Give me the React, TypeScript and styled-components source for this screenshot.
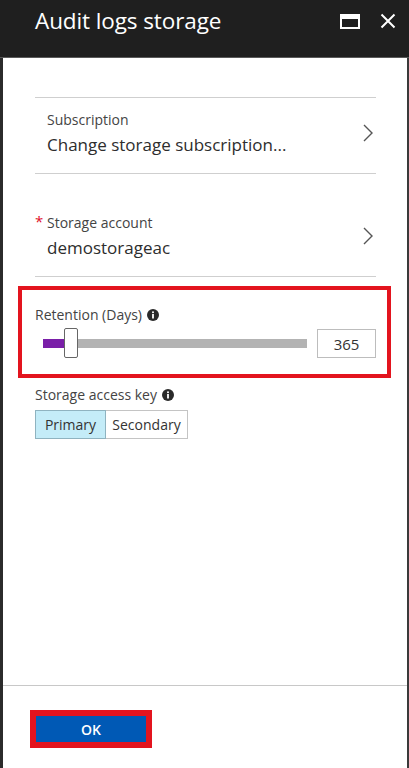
import React from 'react';
import styled, { createGlobalStyle } from 'styled-components';

const GlobalStyle = createGlobalStyle`
  html, body {
    margin: 0;
    padding: 0;
    background: #ffffff;
  }
  body {
    font-family: 'Open Sans', 'Noto Sans', sans-serif;
  }
`;

const Blade = styled.div`
  width: 409px;
  height: 768px;
  box-sizing: border-box;
  display: flex;
  flex-direction: column;
  border-left: 3px solid #2b2b2b;
  border-right: 2px solid #3a3a3a;
  background: #ffffff;
`;

const Header = styled.div`
  height: 58px;
  box-sizing: border-box;
  flex: 0 0 auto;
  background: #1f1f1f;
  border-bottom: 1px solid #5a5a5a;
  display: flex;
  align-items: flex-start;
  margin: 0 -2px 0 -3px;
  padding: 5px 13px 0 35px;
`;

const Title = styled.h1`
  flex: 1;
  margin: 0;
  color: #ffffff;
  font-weight: 400;
  font-size: 22.5px;
  letter-spacing: -0.1px;
`;

const HeaderIcons = styled.div`
  display: flex;
  align-items: center;
  gap: 20px;
  margin-top: 8px;
`;

const Body = styled.div`
  flex: 1;
  padding: 39px 31px 0 32px;
  display: flex;
  flex-direction: column;
`;

const PickerRow = styled.div<{ $top: number }>`
  display: flex;
  align-items: center;
  border-top: 1px solid #cfcfcf;
  padding: ${(p) => p.$top}px 2px 17px 12px;
`;

const PickerText = styled.div`
  flex: 1;
  display: flex;
  flex-direction: column;
  gap: 4px;
`;

const FieldLabel = styled.div`
  position: relative;
  font-size: 14px;
  color: #444444;
  line-height: 19px;
`;

const Required = styled.span`
  position: absolute;
  left: -12px;
  top: -1px;
  color: #e0102b;
  font-size: 15px;
`;

const FieldValue = styled.div`
  font-size: 17px;
  color: #2d2d2d;
  line-height: 23px;
`;

const Divider = styled.div`
  border-top: 1px solid #cfcfcf;
`;

const Highlight = styled.div`
  margin: 9px -15px 0 -17px;
  border: 4px solid #e3141e;
  padding: 15px 11px 16px 13px;
  display: flex;
  flex-direction: column;
  gap: 5px;
`;

const Label = styled.div`
  display: flex;
  align-items: center;
  gap: 5px;
  font-size: 14px;
  color: #444444;
  line-height: 19px;
`;

const SliderRow = styled.div`
  display: flex;
  align-items: center;
  gap: 10px;
`;

const Track = styled.div`
  position: relative;
  flex: 1;
  height: 9px;
  margin-left: 8px;
  background: #b3b3b3;
`;

const Fill = styled.div`
  position: absolute;
  left: 0;
  top: 0;
  bottom: 0;
  background: #7a1fa8;
`;

const Thumb = styled.div`
  position: absolute;
  top: -11px;
  width: 12px;
  height: 28px;
  background: #ffffff;
  border: 1px solid #666666;
  border-radius: 2px;
`;

const NumberBox = styled.div`
  width: 59px;
  height: 29px;
  box-sizing: border-box;
  border: 1px solid #bdbdbd;
  display: flex;
  align-items: center;
  justify-content: center;
  font-size: 15px;
  color: #333333;
`;

const KeySection = styled.div`
  margin-top: 7px;
  display: flex;
  flex-direction: column;
  gap: 6px;
`;

const Toggle = styled.div`
  display: flex;
`;

const ToggleButton = styled.div<{ $active?: boolean; $w: number }>`
  width: ${(p) => p.$w}px;
  height: 29px;
  box-sizing: border-box;
  display: flex;
  align-items: center;
  justify-content: center;
  font-size: 14px;
  color: #333333;
  border: 1px solid ${(p) => (p.$active ? '#8fb3c0' : '#c4c4c4')};
  background: ${(p) => (p.$active ? '#c4ecf8' : '#ffffff')};
  & + & {
    border-left: none;
  }
`;

const Footer = styled.div`
  flex: 0 0 auto;
  height: 83px;
  border-top: 1px solid #c8c8c8;
  padding: 24px 0 0 27px;
  box-sizing: border-box;
`;

const OkFrame = styled.div`
  display: inline-block;
  border: 5px solid #e3141e;
  background: #e3141e;
  padding: 1px;
`;

const OkButton = styled.button`
  width: 110px;
  height: 26px;
  border: none;
  background: #0059b5;
  color: #ffffff;
  font-family: 'Open Sans', sans-serif;
  font-weight: 600;
  font-size: 14px;
  padding: 0;
`;

const Chevron = () => (
  <svg width="12" height="20" viewBox="0 0 12 20">
    <path d="M2 2 L10 10 L2 18" fill="none" stroke="#555" strokeWidth="1.4" />
  </svg>
);

const Info = () => (
  <svg width="12" height="12" viewBox="0 0 12 12">
    <circle cx="6" cy="6" r="6" fill="#2a2a2a" />
    <rect x="5.1" y="5" width="1.8" height="4.5" fill="#fff" />
    <circle cx="6" cy="3.2" r="1" fill="#fff" />
  </svg>
);

export default function App() {
  return (
    <>
      <GlobalStyle />
      <Blade>
        <Header>
          <Title>Audit logs storage</Title>
          <HeaderIcons>
            <svg width="20" height="15" viewBox="0 0 20 15">
              <rect x="1" y="1" width="18" height="13" fill="none" stroke="#fff" strokeWidth="2" />
              <rect x="1" y="1" width="18" height="4" fill="#fff" />
            </svg>
            <svg width="16" height="16" viewBox="0 0 16 16">
              <path d="M1.5 1.5 L14.5 14.5 M14.5 1.5 L1.5 14.5" stroke="#fff" strokeWidth="2" />
            </svg>
          </HeaderIcons>
        </Header>
        <Body>
          <PickerRow $top={12}>
            <PickerText>
              <FieldLabel>Subscription</FieldLabel>
              <FieldValue>Change storage subscription...</FieldValue>
            </PickerText>
            <Chevron />
          </PickerRow>
          <PickerRow $top={39}>
            <PickerText>
              <FieldLabel>
                <Required>*</Required>Storage account
              </FieldLabel>
              <FieldValue>demostorageac</FieldValue>
            </PickerText>
            <Chevron />
          </PickerRow>
          <Divider />
          <Highlight>
            <Label>
              Retention (Days) <Info />
            </Label>
            <SliderRow>
              <Track>
                <Fill style={{ width: '9%' }} />
                <Thumb style={{ left: 'calc(9% - 3px)' }} />
              </Track>
              <NumberBox>365</NumberBox>
            </SliderRow>
          </Highlight>
          <KeySection>
            <Label>
              Storage access key <Info />
            </Label>
            <Toggle>
              <ToggleButton $active $w={71}>Primary</ToggleButton>
              <ToggleButton $w={82}>Secondary</ToggleButton>
            </Toggle>
          </KeySection>
        </Body>
        <Footer>
          <OkFrame>
            <OkButton>OK</OkButton>
          </OkFrame>
        </Footer>
      </Blade>
    </>
  );
}
